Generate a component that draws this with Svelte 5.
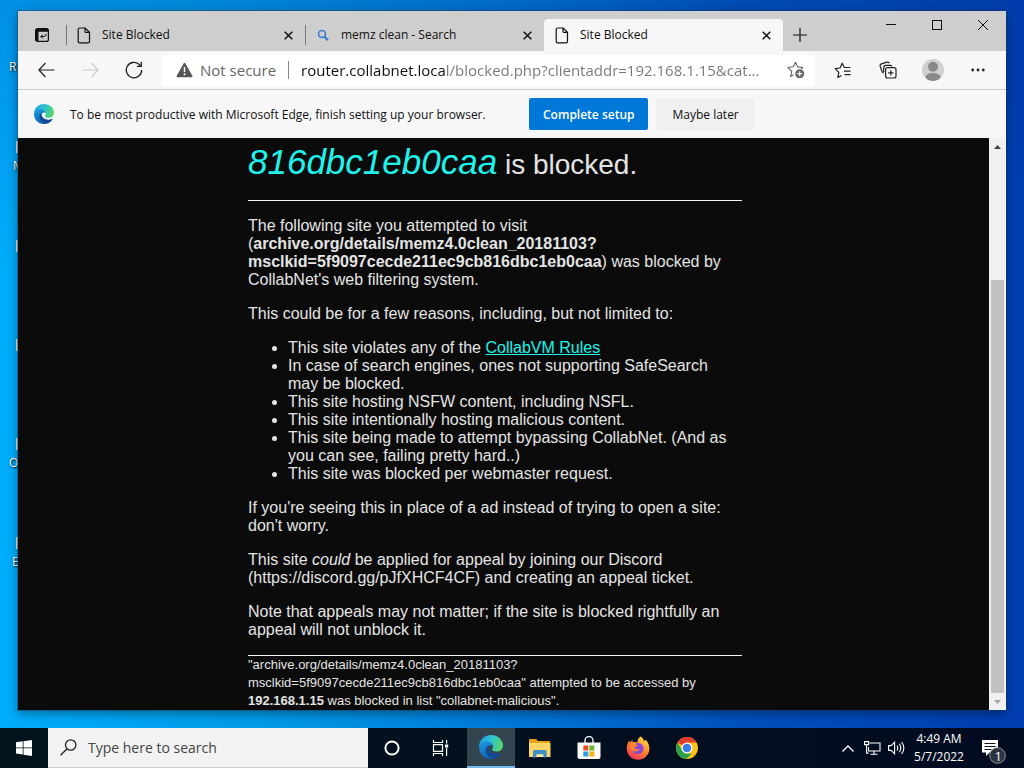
<script>
  const tabs = [
    { title: 'Site Blocked', icon: 'page', active: false },
    { title: 'memz clean - Search', icon: 'search', active: false },
    { title: 'Site Blocked', icon: 'page', active: true }
  ];
  const shortcuts = [
    { letter: 'R', top: 41, indent: 2, bar: false },
    { letter: 'M', top: 140, indent: 6, bar: true },
    { letter: '', top: 239, indent: 6, bar: true },
    { letter: '', top: 338, indent: 6, bar: true },
    { letter: 'O', top: 437, indent: 2, bar: true },
    { letter: 'E', top: 536, indent: 5, bar: true }
  ];
  let url = $state('router.collabnet.local/blocked.php?clientaddr=192.168.1.15&cat...');
  let query = $state('');
</script>

{#snippet edgeLogo(size)}
  <svg width={size} height={size} viewBox="0 0 24 24" aria-hidden="true">
    <defs>
      <linearGradient id="edgeTop{size}" x1="0" y1="0.3" x2="1" y2="0.5">
        <stop offset="0" stop-color="#1ea4e4" />
        <stop offset="0.5" stop-color="#2cc3d2" />
        <stop offset="1" stop-color="#5bd866" />
      </linearGradient>
      <linearGradient id="edgeLeft{size}" x1="0" y1="0" x2="0.4" y2="1">
        <stop offset="0" stop-color="#1b9de2" />
        <stop offset="1" stop-color="#1263b8" />
      </linearGradient>
    </defs>
    <path d="M12 0C18.8 0 24 4.8 24 10.4c0 3.700-3 6.200-6.500 6.200-2.700 0-4.500-.9-4.500-2 0-.7 1-1.200 1-2.900C14 9 11.300 7 8 7 3.500 7 .3 10 0 12 0 5.200 5.200 0 12 0z" fill="url(#edgeTop{size})" />
    <path d="M0 12c.2-3.400 3.600-5.800 7.800-5.800 3.700 0 6.200 2.500 6.200 5-1.300-2-4.800-1-5.600 2.200-.9 4.300 2.700 8.200 7 8.800-1.300 1.300-2.200 1.800-3.800 1.800C5 24 0 18.600 0 12z" fill="url(#edgeLeft{size})" />
    <path d="M9.700 10.500C6 12 6 17 8.500 20.300c1.500 2 3 3 5 3.500 4-.5 7-2.500 8.900-5.600.2-.4-.1-.7-.5-.5-1.500.8-3.200 1.100-4.700 1.100-4.600 0-8-3-8-6.200 0-.8.200-1.500.5-2.100z" fill="#134a96" />
  </svg>
{/snippet}

<main class="desktop">
  {#each shortcuts as s}
    <div class="shortcut" style="top: {s.top}px">
      <i class:faint={!s.bar}></i>
      <span style="padding-left: {s.indent}px">{s.letter}</span>
    </div>
  {/each}

  <div class="stage">
    <section class="window" aria-label="Browser window">
      <header class="strip">
        <button class="actions" aria-label="Tab actions">
          <svg width="14" height="14" viewBox="0 0 14 14">
            <rect x="0.600" y="0.600" width="12.800" height="12.800" rx="2" fill="none" stroke="#111" stroke-width="1.200" />
            <path d="M0.500 2.500a2 2 0 0 1 2-2h9a2 2 0 0 1 2 2v1.200H3.500v9.800h-1a2 2 0 0 1-2-2z" fill="#111" />
            <path d="M11 5.800v1q0 1.700-1.700 1.700H6M7.800 6.500l-2 2 2 2" fill="none" stroke="#111" />
          </svg>
        </button>
        {#each tabs as tab}
          <div class="tab" class:active={tab.active}>
            {#if tab.icon === 'page'}
              <svg width="14" height="17" viewBox="0 0 14 17" fill="none" stroke="#111" stroke-width="1.200">
                <path d="M2.500 1h5.700L12.500 5.300v9.200a1.300 1.300 0 0 1-1.300 1.300H2.500a1.300 1.300 0 0 1-1.300-1.300V2.300A1.300 1.300 0 0 1 2.500 1zM8 1v3.400a1 1 0 0 0 1 1h3.500" />
              </svg>
            {:else}
              <svg width="14" height="17" viewBox="0 0 14 17" fill="none" stroke="#3b7bd0">
                <circle cx="6" cy="7" r="3.500" stroke-width="1.600" />
                <path d="M8.500 9.700l3.500 3.500" stroke-width="2.200" />
              </svg>
            {/if}
            <span>{tab.title}</span>
            <button class="close" aria-label="Close tab">
              <svg width="9" height="9" viewBox="0 0 9 9"><path d="M.7.7l7.600 7.600M8.300.7L.7 8.300" stroke="#111" stroke-width="1.500" /></svg>
            </button>
          </div>
        {/each}
        <button class="newtab" aria-label="New tab">
          <svg width="14" height="14" viewBox="0 0 14 14"><path d="M7 0v14M0 7h14" stroke="#111" stroke-width="1.200" /></svg>
        </button>
        <div class="controls">
          <button aria-label="Minimize"><svg width="10" height="10"><path d="M0 4.500h10" stroke="#111" /></svg></button>
          <button aria-label="Maximize"><svg width="10" height="10"><rect x=".5" y=".5" width="9" height="9" fill="none" stroke="#111" /></svg></button>
          <button aria-label="Close"><svg width="10" height="10"><path d="M0 0l10 10M10 0L0 10" stroke="#111" /></svg></button>
        </div>
      </header>

      <nav class="toolbar">
        <button aria-label="Back"><svg width="17" height="16" viewBox="0 0 17 16" fill="none" stroke="#222" stroke-width="1.200"><path d="M16.500 8H1M7.500 1L.9 8l6.600 7" /></svg></button>
        <button aria-label="Forward" disabled><svg width="17" height="16" viewBox="0 0 17 16" fill="none" stroke="#ccc" stroke-width="1.200"><path d="M.5 8H16M9.500 1l6.600 7-6.600 7" /></svg></button>
        <button aria-label="Refresh"><svg width="18" height="18" viewBox="0 0 18 18" fill="none" stroke="#222" stroke-width="1.300"><path d="M16.700 9A7.700 7.700 0 1 1 14 3.200l2 1.800M16.300.8V5.300H11.800" /></svg></button>
        <div class="address">
          <svg width="17" height="16" viewBox="0 0 17 16"><path d="M8.500.8q.6 0 .9.600l7 12.600q.5 1.200-.7 1.200H1.300q-1.200 0-.7-1.200L7.600 1.400q.3-.6.9-.6z" fill="#555" /><path d="M8.500 5v5" stroke="#fff" stroke-width="1.500" /><circle cx="8.500" cy="12.200" r="1" fill="#fff" /></svg>
          <span class="insecure">Not secure</span>
          <input aria-label="Address" bind:value={url} />
          <button aria-label="Add to favorites">
            <svg width="18" height="18" viewBox="0 0 18 18"><path d="M6.300 5.800L8.500 1.200l2.200 4.700 5.100.6-1.600 1.500M6.600 13.600l-3 1.900 1.200-5.200L1 6.500l5.300-.7" fill="none" stroke="#666" stroke-width="1.100" stroke-linejoin="round" /><circle cx="12.700" cy="12.700" r="4.500" fill="#666" /><path d="M12.700 10.200v5M10.200 12.700h5" stroke="#fff" stroke-width="1.200" /></svg>
          </button>
        </div>
        <div class="tools">
          <button aria-label="Favorites"><svg width="18" height="17" viewBox="0 0 18 17" fill="none" stroke="#222" stroke-width="1.200" stroke-linejoin="round"><path d="M10.300 5.500L8.200 1.200 6 6l-4.800.6 3.600 3.700-1 5.200 3.700-2.100M10.300 5.500h6M10 9.200h6.500M10.500 12.700h6" /></svg></button>
          <button aria-label="Collections"><svg width="18" height="18" viewBox="0 0 18 18" fill="none" stroke="#222" stroke-width="1.200"><rect x="6.600" y="6.600" width="10.400" height="10.400" rx="2" /><path d="M11.800 9.200v5.200M9.200 11.800h5.200M4.500 12.300L3 10.500 1.200 5.200q-.5-1.700 1.200-2.300L8 1.200q1.500-.4 2.200.9M4.700 11V6.700q0-2.200 2-2.300h4.800q1 0 1.300 1" /></svg></button>
          <button aria-label="Profile"><svg width="22" height="22" viewBox="0 0 22 22"><clipPath id="face"><circle cx="11" cy="11" r="11" /></clipPath><g clip-path="url(#face)"><rect width="22" height="22" fill="#d2d0cf" /><circle cx="11" cy="7.800" r="5" fill="#8b8988" /><ellipse cx="11" cy="18" rx="7.500" ry="4" fill="#8b8988" /></g></svg></button>
          <button aria-label="Settings and more"><svg width="14" height="4" fill="#222"><circle cx="1.700" cy="2" r="1.400" /><circle cx="7" cy="2" r="1.400" /><circle cx="12.300" cy="2" r="1.400" /></svg></button>
        </div>
      </nav>

      <aside class="infobar">
        {@render edgeLogo(20)}
        <p>To be most productive with Microsoft Edge, finish setting up your browser.</p>
        <button class="primary">Complete setup</button>
        <button class="later">Maybe later</button>
      </aside>

      <div class="view">
        <article class="page">
          <h1><em>816dbc1eb0caa</em> is blocked.</h1>
          <hr />
          <p>The following site you attempted to visit (<b>archive.org/details/memz4.0clean_20181103?<wbr />msclkid=5f9097cecde211ec9cb816dbc1eb0caa</b>) was blocked by CollabNet's web filtering system.</p>
          <p>This could be for a few reasons, including, but not limited to:</p>
          <ul>
            <li>This site violates any of the <a href="#rules">CollabVM Rules</a></li>
            <li>In case of search engines, ones not supporting SafeSearch may be blocked.</li>
            <li>This site hosting NSFW content, including NSFL.</li>
            <li>This site intentionally hosting malicious content.</li>
            <li>This site being made to attempt bypassing CollabNet. (And as you can see, failing pretty hard..)</li>
            <li>This site was blocked per webmaster request.</li>
          </ul>
          <p>If you're seeing this in place of a ad instead of trying to open a site: don't worry.</p>
          <p>This site <i>could</i> be applied for appeal by joining our Discord (https://discord.gg/pJfXHCF4CF) and creating an appeal ticket.</p>
          <p>Note that appeals may not matter; if the site is blocked rightfully an appeal will not unblock it.</p>
          <hr />
          <footer>"archive.org/details/memz4.0clean_20181103?<wbr />msclkid=5f9097cecde211ec9cb816dbc1eb0caa" attempted to be accessed by <b>192.168.1.15</b> was blocked in list "collabnet-malicious".</footer>
        </article>
        <div class="scrollbar">
          <button aria-label="Scroll up"><svg width="7" height="4"><path d="M0 4L3.500 0 7 4z" fill="#444" /></svg></button>
          <div class="track"><div class="thumb"></div></div>
          <button aria-label="Scroll down"><svg width="7" height="4"><path d="M0 0l3.500 4L7 0z" fill="#a0a0a0" /></svg></button>
        </div>
      </div>
    </section>
  </div>

  <footer class="taskbar">
    <button class="start" aria-label="Start"><svg width="16" height="16" viewBox="0 0 16 16" fill="#fff"><path d="M0 2.300L6.700 1.300V7.500H0zM7.500 1.200L16 0v7.500H7.500zM0 8.300h6.700v6.300L0 13.600zM7.500 8.300H16V16l-8.500-1.200z" /></svg></button>
    <label class="search">
      <svg width="17" height="17" viewBox="0 0 17 17" fill="none" stroke="#222" stroke-width="1.300"><circle cx="10.700" cy="6" r="5.200" /><path d="M7 9.700L.6 16.200" /></svg>
      <input aria-label="Search" placeholder="Type here to search" bind:value={query} />
    </label>
    <button aria-label="Cortana"><svg width="16" height="16"><circle cx="8" cy="8" r="6.600" fill="none" stroke="#fff" stroke-width="2" /></svg></button>
    <button aria-label="Task view"><svg width="17" height="16" viewBox="0 0 17 16" fill="none" stroke="#fff" stroke-width="1.200"><path d="M1.500 0v2.500h9V0M1.500 16v-2.500h9V16M1.500 4.600h9v6.800h-9zM14.600 0v3.500M14.600 8v8" /><path d="M13 4.500h3.200v3H13z" fill="#fff" stroke="none" /></svg></button>
    <div class="apps">
      <button class="running" aria-label="Microsoft Edge">{@render edgeLogo(24)}</button>
      <button aria-label="File Explorer"><svg width="22" height="19" viewBox="0 0 22 19"><path d="M0 1q0-1 1-1h6l2 2h11q1 0 1 1v3H0z" fill="#e8a317" /><path d="M0 4h21.500v14H0z" fill="#fbd666" /><path d="M4 18.500v-6q0-1.500 1.500-1.500h10.700q1.500 0 1.500 1.500v6h-3.500v-3H7.500v3z" fill="#3f8fc9" /><path d="M7.500 15.500h6.700V18H7.500z" fill="#fbe8a5" /></svg></button>
      <button aria-label="Microsoft Store"><svg width="24" height="24" viewBox="0 0 24 24"><path d="M8 7V4.500a4 4 0 0 1 8 0V7" fill="none" stroke="#e8f2f8" stroke-width="1.400" /><path d="M.5 6.500h23V21q0 2-2 2h-19q-2 0-2-2z" fill="#fafafa" /><path d="M6.300 9.500h5v5h-5z" fill="#e8502a" /><path d="M12.300 9.500h5v5h-5z" fill="#6fb52c" /><path d="M6.300 15.500h5v5h-5z" fill="#2c9fe0" /><path d="M12.300 15.500h5v5h-5z" fill="#f5b517" /></svg></button>
      <button aria-label="Firefox"><svg width="24" height="24" viewBox="0 0 24 24"><defs><linearGradient id="fox" x1="0.800" y1="0" x2="0.200" y2="1"><stop offset="0" stop-color="#ffe14a" /><stop offset="0.450" stop-color="#ff8a2a" /><stop offset="1" stop-color="#f0305f" /></linearGradient></defs><path d="M14.500.5c2 1 3.200 2.700 3.500 4.500 1-.2 1.300-1 1.400-1.500 2.300 2 4 5.500 4 9A11.300 11.300 0 0 1 12 23.700 11.300 11.300 0 0 1 .7 12.500c0-2.600 1-6 2.600-8l.5 2L6.500 4v2.500c2-.7 4-.5 5 .3-.3-2.800 1-5 3-6.300z" fill="url(#fox)" /><circle cx="12" cy="12.500" r="5.500" fill="#8a46d8" /><path d="M5 8.500c2-1.500 5-.8 6.800.7-.3 1-1.700 1.300-2.700 1.600-1 .4-.7 2.200.8 2.500 1.500.2 2.500-.8 3.600.2-1.700 3-7.500 2.300-8.700-1.500z" fill="#ff8a27" /></svg></button>
      <button aria-label="Chrome"><svg width="24" height="24" viewBox="0 0 24 24"><circle cx="12" cy="12" r="11" fill="#fbc116" /><path d="M12 12L2.500 6.500A11 11 0 0 1 21.500 6.500H12z" fill="#e33b2e" /><path d="M2.500 6.500l4.800 8.200L12 17.500h4.800L11.200 23A11 11 0 0 1 2.500 6.500z" fill="#2da04a" /><circle cx="12" cy="12" r="5.500" fill="#fff" /><circle cx="12" cy="12" r="4.300" fill="#3b7de8" /></svg></button>
    </div>
    <div class="tray">
      <button aria-label="Show hidden icons"><svg width="12" height="7"><path d="M.5 6.500L6 1l5.500 5.500" fill="none" stroke="#fff" stroke-width="1.300" /></svg></button>
      <button aria-label="Network"><svg width="17" height="14" viewBox="0 0 17 14" fill="none" stroke="#fff" stroke-width="1.100"><path d="M5.500 2h10.500v8H4.500V6M10 10v3M6.500 13.300h7M.6.6h4v3h-4zM2.600 3.600v8.500h2" /></svg></button>
      <button aria-label="Volume"><svg width="17" height="14" viewBox="0 0 17 14" fill="none" stroke="#fff" stroke-width="1.100"><path d="M.6 4.600h2.500L6.600 1.200v11.600L3.100 9.400H.6zM9 4.500q1.500 2.500 0 5M11.300 2.800q3 4.200 0 8.400M13.600 1q4.500 6 0 12" /></svg></button>
      <button class="clock"><span>4:49 AM</span><span>5/7/2022</span></button>
      <button class="notes" aria-label="Notifications">
        <svg width="26" height="26" viewBox="0 0 26 26"><path d="M1 1h16v12.500H8.500L5 17v-3.500H1z" fill="#fff" /><path d="M3.500 4.500h11M3.500 7.500h11M3.500 10.500h7" stroke="#0a1420" stroke-width="1.200" /><circle cx="16.500" cy="16.500" r="7.800" fill="#2b333e" stroke="#8d949c" /></svg>
        <span class="count">1</span>
      </button>
    </div>
  </footer>
</main>

<style>
  :global(body) { margin: 0; }
  * { box-sizing: border-box; }
  button, input { font: inherit; color: inherit; border: 0; padding: 0; background: none; outline: 0; }
  button { display: flex; align-items: center; justify-content: center; flex-shrink: 0; }
  svg { display: block; flex-shrink: 0; }

  .desktop {
    position: relative;
    display: flex;
    flex-direction: column;
    height: 100vh;
    overflow: hidden;
    font-family: "Open Sans", "Noto Sans", sans-serif;
    font-size: 12px;
    color: #111;
    background:
      linear-gradient(180deg, rgba(0, 60, 160, 0.25), transparent 35%),
      linear-gradient(90deg, #00adfb 0%, #009be8 25%, #0078d6 50%, #0050bd 72%, #003daf 100%);
  }
  .shortcut { position: absolute; left: 7px; width: 11px; color: #fff; line-height: 15px; text-shadow: 1px 1px 2px #000; }
  .shortcut i { display: block; width: 2px; height: 12px; margin: 1px 0 5px auto; background: #d5e4ee; }
  .shortcut i.faint { background: transparent; }
  .shortcut span { display: block; white-space: nowrap; }

  .stage { position: relative; flex: 1; min-height: 0; display: flex; padding: 11px 18px 18px; }
  .window {
    flex: 1;
    min-width: 0;
    display: flex;
    flex-direction: column;
    background: #f7f7f7;
    box-shadow: 0 0 0 1px rgba(30, 60, 90, 0.4), 0 3px 10px rgba(0, 0, 0, 0.4);
  }

  .strip { display: flex; align-items: flex-end; height: 40px; background: #cecece; }
  .actions { width: 48px; height: 32px; }
  .tab {
    display: flex;
    align-items: center;
    flex: 0 1 239px;
    min-width: 0;
    height: 32px;
    padding: 0 12px 0 11px;
    background: linear-gradient(#777, #777) left center / 1px 20px no-repeat;
  }
  .tab span { flex: 1; margin-left: 11px; white-space: nowrap; overflow: hidden; font-size: 12px; line-height: 16px; }
  .tab.active { background: #f7f7f7; border-radius: 4px 4px 0 0; }
  .close { width: 10px; height: 16px; }
  .newtab { width: 34px; height: 32px; }
  .controls { display: flex; align-self: flex-start; margin-left: auto; }
  .controls button { width: 46px; height: 28px; }

  .toolbar { display: flex; align-items: center; height: 39px; padding: 0 6px; border-bottom: 1px solid #ccc; }
  .toolbar > button { width: 44px; height: 32px; }
  .address { flex: 1; min-width: 0; display: flex; align-items: center; height: 31px; margin-left: 6px; padding: 0 10px 0 14px; background: #fff; border-radius: 3px; font-size: 15px; }
  .insecure { margin: 0 12px 0 7px; white-space: nowrap; color: #666; }
  .address input {
    flex: 1;
    min-width: 0;
    height: 18px;
    padding-left: 12px;
    border-left: 1px solid #888;
    color: transparent;
    background: linear-gradient(90deg, #111 156px, #777 156px);
    -webkit-background-clip: text;
    background-clip: text;
    caret-color: #111;
  }
  .tools { display: flex; margin-left: 5px; }
  .tools button { width: 45px; height: 32px; }

  .infobar { display: flex; align-items: center; height: 48px; padding: 0 16px; }
  .infobar p { flex: 0 1 427px; margin: 0 32px 0 16px; white-space: nowrap; }
  .infobar button { height: 32px; padding: 0 14px; border-radius: 2px; }
  .infobar .primary { background: #0078d7; color: #fff; font-weight: 600; }
  .infobar .later { margin-left: 8px; padding: 0 16px; background: #f0f0f0; font-weight: 500; }

  .view { flex: 1; min-height: 0; display: flex; background: #0b0b0b; }
  .page {
    flex: 1;
    overflow: hidden;
    padding-left: 230px;
    padding-right: 247px;
    font: 16px/18px "Liberation Sans", Arial, sans-serif;
    color: #e4e4e4;
  }
  h1 { margin: 4px 0 15px; font-size: 28px; line-height: 40px; font-weight: 400; }
  h1 em { font-size: 35px; color: #1ef3ec; }
  hr { height: 1px; margin: 0; border: 0; background: #f0f0f0; }
  .page p, .page ul { margin: 16px 0; }
  .page ul { padding-left: 40px; }
  .page a { color: #1ef3ec; }
  .page footer { font-size: 13px; }

  .scrollbar { width: 17px; display: flex; flex-direction: column; background: #f1f1f1; }
  .scrollbar button { height: 17px; }
  .track { flex: 1; display: flex; flex-direction: column; padding: 0 2px; }
  .thumb { flex: 1; margin-top: 125px; background: #c1c1c1; }

  .taskbar { position: relative; display: flex; height: 40px; color: #fff; background: linear-gradient(90deg, #04141f, #03101f 50%, #020b20); }
  .taskbar > button, .apps button { width: 48px; height: 40px; }
  .search { display: flex; align-items: center; flex: 0 1 320px; min-width: 0; padding: 0 12px; gap: 11px; color: #333; background: #f2f2f2; border: 1px solid #ccc; border-width: 0 0 1px; font-size: 14px; }
  .search input { flex: 1; min-width: 0; }
  .search input::placeholder { color: #444; opacity: 1; }
  .apps { display: flex; gap: 1px; margin-left: 3px; }
  .apps .running { background: #33454f; border-bottom: 2px solid #76b9ed; }
  .tray { display: flex; margin-left: auto; padding-right: 6px; }
  .tray button { width: 24px; height: 40px; }
  .tray .clock { width: 62px; flex-direction: column; line-height: 18px; white-space: nowrap; }
  .tray .notes { position: relative; width: 48px; padding-top: 8px; }
  .count { position: absolute; right: 16px; bottom: 4px; font-size: 13px; line-height: 16px; }
</style>
